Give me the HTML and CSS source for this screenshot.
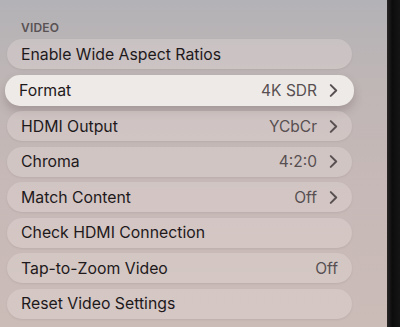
FILE: index.html
```html
<!DOCTYPE html>
<html lang="en">
<head>
    <meta charset="UTF-8">
    <title>Video Settings</title>
    <link rel="stylesheet" href="styles.css">
</head>
<body>
    <div class="screen">
        <h4 class="section-title">VIDEO</h4>

        <!-- Video settings list -->
        <ul class="settings">
            <li class="row"><span class="label">Enable Wide Aspect Ratios</span></li>
            <li class="row focused">
                <span class="label">Format</span>
                <span class="value">4K SDR</span>
                <svg class="chevron" viewBox="0 0 8 12"><path d="M1.5 1 L6.5 6 L1.5 11"/></svg>
            </li>
            <li class="row">
                <span class="label">HDMI Output</span>
                <span class="value">YCbCr</span>
                <svg class="chevron" viewBox="0 0 8 12"><path d="M1.5 1 L6.5 6 L1.5 11"/></svg>
            </li>
            <li class="row">
                <span class="label">Chroma</span>
                <span class="value">4:2:0</span>
                <svg class="chevron" viewBox="0 0 8 12"><path d="M1.5 1 L6.5 6 L1.5 11"/></svg>
            </li>
            <li class="row">
                <span class="label">Match Content</span>
                <span class="value">Off</span>
                <svg class="chevron" viewBox="0 0 8 12"><path d="M1.5 1 L6.5 6 L1.5 11"/></svg>
            </li>
            <li class="row"><span class="label">Check HDMI Connection</span></li>
            <li class="row">
                <span class="label">Tap-to-Zoom Video</span>
                <span class="value">Off</span>
            </li>
            <li class="row"><span class="label">Reset Video Settings</span></li>
        </ul>
    </div>
    <div class="bezel"></div>
</body>
</html>
```
FILE: styles.css
```css
html, body {
    height: 100%;
}
body {
    margin: 0;
    display: flex;
    font-family: Inter, "Noto Sans", sans-serif;
    background-color: #111;
    overflow: hidden;
}
.screen {
    flex: 1;
    padding: 0 35px 0 7px;
    background: linear-gradient(180deg, #b3b2b6 0%, #bfb6b6 25%, #c7b9b7 60%, #cbbcb8 100%);
}
.bezel {
    width: 13px;
    background: linear-gradient(90deg, #2a2626 0%, #0c0c0c 40%, #151515 100%);
}
.section-title {
    margin: 20px 0 0 14px;
    height: 19px;
    font-size: 12px;
    font-weight: 600;
    color: #595254;
    letter-spacing: 0.2px;
}
.settings {
    list-style: none;
    margin: 0;
    padding: 0;
    display: flex;
    flex-direction: column;
    gap: 5.5px;
}
.row {
    height: 30px;
    display: flex;
    align-items: center;
    padding: 0 14px;
    border-radius: 15px;
    background-color: rgba(228, 218, 215, 0.38);
    box-shadow: 0 1px 2px rgba(120, 100, 100, 0.14);
    color: #1e191b;
    font-size: 15.8px;
}
.label {
    flex: 1;
}
.value {
    color: #574f51;
    font-size: 15.5px;
}
.chevron {
    width: 9px;
    height: 13px;
    margin-left: 12px;
    fill: none;
    stroke: #574f51;
    stroke-width: 1.8;
    stroke-linecap: round;
    stroke-linejoin: round;
}
.focused {
    height: 31px;
    margin: 0 -2px;
    padding: 0 16px 0 14px;
    background-color: #eeeae7;
    box-shadow: 0 5px 10px rgba(80, 60, 60, 0.25);
}
```
